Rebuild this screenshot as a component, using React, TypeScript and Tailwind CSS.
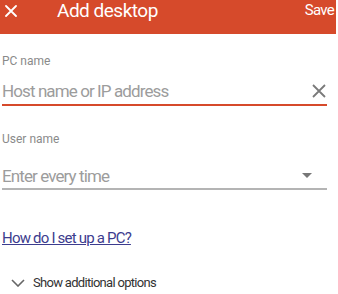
export default function App() {
  return (
    <div className="w-[338px] h-[294px] bg-white overflow-hidden" style={{ fontFamily: 'Roboto, "Liberation Sans", sans-serif' }}>
      <header className="w-[336px] h-[34px] bg-[#d64a2b] flex items-start text-white">
        <button className="w-[18px] h-[18px] ml-[2px] mt-[2px] flex items-center justify-center">
          <svg width="12" height="12" viewBox="0 0 12 12" stroke="white" strokeWidth="1.8" strokeLinecap="round">
            <path d="M1 1 L11 11 M11 1 L1 11" />
          </svg>
        </button>
        <h1 className="ml-[37px] mt-[-1px] text-[19px] leading-[24px] tracking-[-0.5px]">Add desktop</h1>
        <span className="ml-auto mr-[2px] mt-[1px] text-[15px] leading-[18px] tracking-[-0.7px]">Save</span>
      </header>

      <div className="px-[2px] w-[329px]">
        <label className="block mt-[20px] text-[12px] leading-[14px] text-[#8a8a8a]">PC name</label>
        <div className="mt-[12px] flex items-center border-b-2 border-[#d64a2b] h-[26px] pb-[2px]">
          <span className="flex-1 text-[17px] leading-[22px] text-[#9c9c9c] tracking-[-0.9px]">Host name or IP address</span>
          <svg width="14" height="14" viewBox="0 0 14 14" stroke="#7a7a7a" strokeWidth="1.8" className="mr-[1px]">
            <path d="M1 1 L13 13 M13 1 L1 13" />
          </svg>
        </div>

        <label className="block mt-[26px] text-[12px] leading-[14px] text-[#8a8a8a]">User name</label>
        <div className="mt-[19px] flex items-center border-b-2 border-[#b4b4b4] h-[25px] pb-[2px]">
          <span className="flex-1 text-[17px] leading-[22px] text-[#9c9c9c] tracking-[-0.9px]">Enter every time</span>
          <svg width="10" height="6" viewBox="0 0 10 6" className="mr-[15px]">
            <path d="M0 0 H10 L5 5 Z" fill="#777" />
          </svg>
        </div>

        <a href="#" className="block mt-[39px] text-[15px] leading-[18px] text-[#3c3c8e] underline tracking-[-0.8px]">How do I set up a PC?</a>

        <div className="mt-[28px] flex items-center text-[13px] leading-[16px] text-[#333]">
          <svg width="14" height="8" viewBox="0 0 14 8" fill="none" stroke="#666" strokeWidth="1.6" className="ml-[9px]">
            <path d="M1 1 L7 7 L13 1" />
          </svg>
          <span className="ml-[8px] tracking-[-0.7px]">Show additional options</span>
        </div>
      </div>
    </div>
  );
}
